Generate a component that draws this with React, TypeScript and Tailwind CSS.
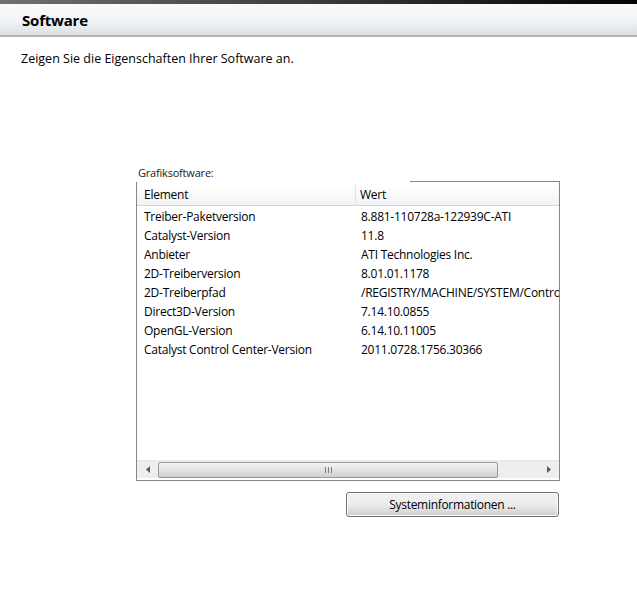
import React from 'react';

interface Row {
  element: string;
  wert: string;
}

const rows: Row[] = [
  { element: 'Treiber-Paketversion', wert: '8.881-110728a-122939C-ATI' },
  { element: 'Catalyst-Version', wert: '11.8' },
  { element: 'Anbieter', wert: 'ATI Technologies Inc.' },
  { element: '2D-Treiberversion', wert: '8.01.01.1178' },
  { element: '2D-Treiberpfad', wert: '/REGISTRY/MACHINE/SYSTEM/ControlSet001/Control/Class' },
  { element: 'Direct3D-Version', wert: '7.14.10.0855' },
  { element: 'OpenGL-Version', wert: '6.14.10.11005' },
  { element: 'Catalyst Control Center-Version', wert: '2011.0728.1756.30366' },
];

export default function App() {
  return (
    <div
      className="w-[637px] h-[612px] bg-white text-black overflow-hidden"
      style={{ fontFamily: '"Open Sans", "Noto Sans", sans-serif' }}
    >
      <div className="h-[4px] bg-gradient-to-r from-[#707070] via-[#3a3a3a] to-[#050505]" />
      <div className="h-[33px] bg-gradient-to-b from-[#f7f9fb] via-[#f3f5f8] to-[#dcdfe3] border-b-2 border-[#b4b6b9] flex items-center pl-[22px] pt-[2px]">
        <span className="text-[15px] font-bold tracking-[-0.2px]">Software</span>
      </div>

      <p className="mt-[14px] ml-[21px] text-[12.5px] leading-[16px]">
        Zeigen Sie die Eigenschaften Ihrer Software an.
      </p>

      <div className="ml-[136px] mt-[99px] w-[424px]">
        <div className="ml-[2px] text-[11px] leading-[14px] tracking-[-0.2px] text-[#1a1a1a]">Grafiksoftware:</div>

        {/* top edge of the list only shows right of the label gap */}
        <div className="mt-[1px] ml-[274px] h-px bg-[#828790]" />
        <div className="h-[299px] border border-t-0 border-[#828790] flex flex-col">
          <div className="mt-[3px] h-[21px] flex bg-gradient-to-b from-white to-[#f2f3f4] border-b border-[#d5d5d5] text-[12px] tracking-[-0.25px]">
            <div className="w-[219px] pl-[7px] flex items-center border-r border-[#dfe2e6]">Element</div>
            <div className="pl-[4px] flex items-center">Wert</div>
          </div>

          <div className="flex-1 overflow-hidden pt-[1px]">
            {rows.map((r) => (
              <div key={r.element} className="h-[19px] flex items-center text-[12px] tracking-[-0.25px] whitespace-nowrap">
                <div className="w-[220px] pl-[7px] shrink-0">{r.element}</div>
                <div className="pl-[4px] overflow-hidden flex-1">{r.wert}</div>
              </div>
            ))}
          </div>

          <div className="h-[18px] mb-[2px] flex items-center bg-[#eeeeee] border-t border-[#e6e6e6]">
            <div className="w-[21px] h-full flex items-center justify-center">
              <svg width="4" height="7" viewBox="0 0 4 7">
                <path d="M4 0 L0 3.5 L4 7 Z" fill="#5a5a5a" />
              </svg>
            </div>
            <div className="w-[340px] h-[16px] rounded-[2px] border border-[#979797] bg-gradient-to-b from-[#f3f3f3] via-[#e3e3e3] to-[#cfcfcf] flex items-center justify-center">
              <svg width="7" height="6" viewBox="0 0 7 6">
                <rect x="0" y="0" width="1" height="6" fill="#7a7a7a" />
                <rect x="3" y="0" width="1" height="6" fill="#7a7a7a" />
                <rect x="6" y="0" width="1" height="6" fill="#7a7a7a" />
              </svg>
            </div>
            <div className="flex-1" />
            <div className="w-[21px] h-full flex items-center justify-center">
              <svg width="4" height="7" viewBox="0 0 4 7">
                <path d="M0 0 L4 3.5 L0 7 Z" fill="#5a5a5a" />
              </svg>
            </div>
          </div>
        </div>

        <div className="mt-[11px] flex justify-end pr-[1px]">
          <button className="w-[213px] h-[25px] rounded-[3px] border border-[#707070] bg-gradient-to-b from-[#f2f2f2] via-[#ebebeb] to-[#cfcfcf] text-[12px] tracking-[-0.3px] shadow-[inset_0_0_0_1px_#fcfcfc]">
            Systeminformationen ...
          </button>
        </div>
      </div>
    </div>
  );
}
